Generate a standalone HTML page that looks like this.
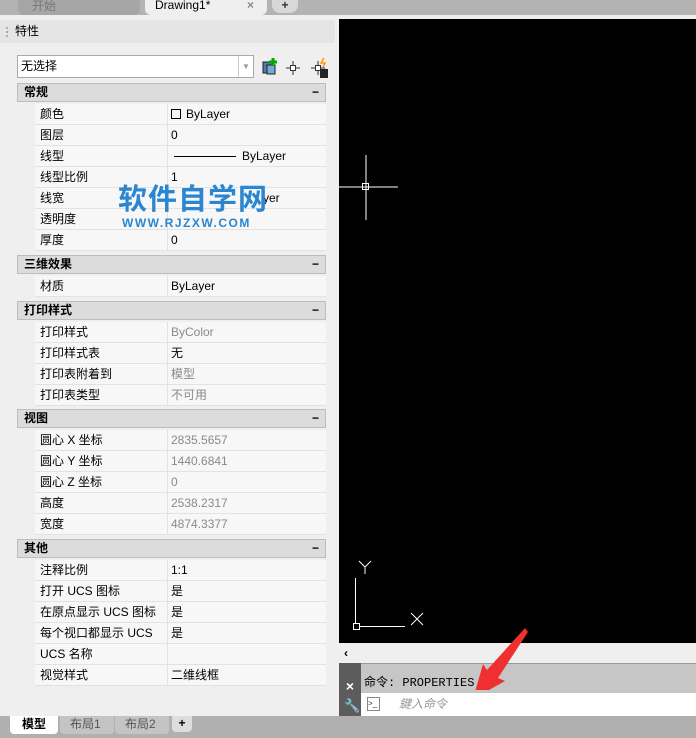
<!DOCTYPE html><html><head><meta charset="utf-8"><style>
*{margin:0;padding:0;box-sizing:border-box}
body{width:696px;height:738px;overflow:hidden;background:#efefef;font-family:"Liberation Sans","Noto Sans CJK SC",sans-serif;font-size:12px;color:#000;position:relative}
.a{position:absolute}
.hdr{position:absolute;left:17px;width:309px;height:19px;background:#dcdcdc;border:1px solid #bdbdbd;font-weight:bold;padding-left:6px;line-height:17px}
.hdr:after{content:"−";position:absolute;right:6px;top:0;font-weight:bold}
.row{position:absolute;left:35px;width:291px;height:21px;border-bottom:1px solid #e2e2e2;background:#f7f7f7;line-height:20px}
.row .l{position:absolute;left:5px}
.row .v{position:absolute;left:132px;top:0;height:21px;border-left:1px solid #e2e2e2;padding-left:3px;width:159px}
.g{color:#8a8a8a}
</style></head><body>
<div class="a" style="left:0;top:0;width:696px;height:15px;background:#b3b3b3"></div>
<div class="a" style="left:18px;top:0;width:122px;height:15px;background:#a6a6a6;border-radius:0 0 6px 6px;color:#777;padding-left:14px;line-height:12px">开始</div>
<div class="a" style="left:145px;top:0;width:122px;height:15px;background:#efefef;border-radius:0 0 6px 6px;line-height:11px;padding-left:10px">Drawing1*<span style="position:absolute;left:102px;color:#888;font-weight:bold">×</span></div>
<div class="a" style="left:272px;top:0;width:26px;height:13px;background:#d8d8d8;border-radius:0 0 8px 8px;text-align:center;font-weight:bold;line-height:11px;color:#333">+</div>
<div class="a" style="left:0;top:20px;width:335px;height:23px;background:#e5e5e5;padding-left:15px;line-height:22px">特性</div>
<div class="a" style="left:6px;top:27px;width:2px;height:10px;border-left:2px dotted #aaa"></div>
<div class="a" style="left:17px;top:55px;width:237px;height:23px;background:#fff;border:1px solid #a9a9a9;line-height:21px;padding-left:3px">无选择<span style="position:absolute;right:0;top:0;width:15px;height:21px;border-left:1px solid #ccc;color:#999;font-size:8px;text-align:center">▼</span></div>
<svg class="a" style="left:260px;top:57px" width="70" height="22"><rect x="3" y="5" width="10" height="11" fill="#4a7fb0" stroke="#222"/><rect x="7" y="8" width="8" height="9" fill="#7aa8d4" stroke="#222"/><path d="M13 1v8M9 5h8" stroke="#0a0" stroke-width="3"/><path d="M33 4v14M26 11h14" stroke="#333"/><rect x="30.5" y="8.5" width="5" height="5" fill="#fff" stroke="#333"/><path d="M58 4v14M51 11h14" stroke="#333"/><rect x="55.5" y="8.5" width="5" height="5" fill="#fff" stroke="#333"/><rect x="60" y="12" width="8" height="9" fill="#222"/><path d="M64 1l-3 5h4l-2 4" stroke="#f90" fill="none" stroke-width="1.5"/></svg>
<div class="hdr" style="top:83px">常规</div>
<div class="row" style="top:104px"><span class="l">颜色</span><span class="v"><span style="display:inline-block;width:10px;height:10px;border:1px solid #000;vertical-align:-1px;margin-right:5px"></span>ByLayer</span></div>
<div class="row" style="top:125px"><span class="l">图层</span><span class="v">0</span></div>
<div class="row" style="top:146px"><span class="l">线型</span><span class="v"><span style="display:inline-block;width:62px;border-top:1px solid #000;vertical-align:3px;margin:0 6px 0 3px"></span>ByLayer</span></div>
<div class="row" style="top:167px"><span class="l">线型比例</span><span class="v">1</span></div>
<div class="row" style="top:188px"><span class="l">线宽</span><span class="v"></span><span style="position:absolute;left:228px">yer</span></div>
<div class="row" style="top:209px"><span class="l">透明度</span><span class="v"></span></div>
<div class="row" style="top:230px"><span class="l">厚度</span><span class="v">0</span></div>
<div class="hdr" style="top:255px">三维效果</div>
<div class="row" style="top:276px"><span class="l">材质</span><span class="v">ByLayer</span></div>
<div class="hdr" style="top:301px">打印样式</div>
<div class="row" style="top:322px"><span class="l">打印样式</span><span class="v g">ByColor</span></div>
<div class="row" style="top:343px"><span class="l">打印样式表</span><span class="v">无</span></div>
<div class="row" style="top:364px"><span class="l">打印表附着到</span><span class="v g">模型</span></div>
<div class="row" style="top:385px"><span class="l">打印表类型</span><span class="v g">不可用</span></div>
<div class="hdr" style="top:409px">视图</div>
<div class="row" style="top:430px"><span class="l">圆心 X 坐标</span><span class="v g">2835.5657</span></div>
<div class="row" style="top:451px"><span class="l">圆心 Y 坐标</span><span class="v g">1440.6841</span></div>
<div class="row" style="top:472px"><span class="l">圆心 Z 坐标</span><span class="v g">0</span></div>
<div class="row" style="top:493px"><span class="l">高度</span><span class="v g">2538.2317</span></div>
<div class="row" style="top:514px"><span class="l">宽度</span><span class="v g">4874.3377</span></div>
<div class="hdr" style="top:539px">其他</div>
<div class="row" style="top:560px"><span class="l">注释比例</span><span class="v">1:1</span></div>
<div class="row" style="top:581px"><span class="l">打开 UCS 图标</span><span class="v">是</span></div>
<div class="row" style="top:602px"><span class="l">在原点显示 UCS 图标</span><span class="v">是</span></div>
<div class="row" style="top:623px"><span class="l">每个视口都显示 UCS</span><span class="v">是</span></div>
<div class="row" style="top:644px"><span class="l">UCS 名称</span><span class="v"></span></div>
<div class="row" style="top:665px"><span class="l">视觉样式</span><span class="v">二维线框</span></div>
<div class="a" style="left:118px;top:183px;font-size:29px;font-weight:bold;color:#2a86d0;letter-spacing:1px;line-height:34px">软件自学网</div>
<div class="a" style="left:122px;top:216px;font-size:12px;font-weight:bold;color:#2a86d0;letter-spacing:1.5px">WWW.RJZXW.COM</div>
<div class="a" style="left:339px;top:19px;width:357px;height:624px;background:#000"></div>
<svg class="a" style="left:339px;top:19px" width="357" height="624"><g stroke="#fff" fill="none"><path d="M27 136v65M0 168h59"/><rect x="23.5" y="164.5" width="6" height="6"/><path d="M16.5 559v45M20 607.5h46"/><rect x="14.5" y="604.5" width="6" height="6"/><path d="M20 542l6 6 6-6M26 548v7M72 594l12 12M84 594l-12 12"/></g></svg>
<div class="a" style="left:339px;top:643px;width:357px;height:21px;background:#efefef;font-weight:bold;padding-left:5px;line-height:20px">‹</div>
<div class="a" style="left:339px;top:663px;width:22px;height:53px;background:#5c5c5c;color:#fff;font-weight:bold;font-size:14px;text-align:center;line-height:46px">×</div>
<div class="a" style="left:361px;top:663px;width:335px;height:30px;background:#c6c6c6;border-top:1px solid #999;font-family:'Liberation Mono','Noto Sans CJK SC',monospace;padding:12px 0 0 3px;line-height:14px">命令: PROPERTIES</div>
<div class="a" style="left:361px;top:693px;width:335px;height:23px;background:#fff;color:#999;font-style:italic;padding-left:38px;line-height:22px">鍵入命令</div>
<div class="a" style="left:367px;top:697px;width:13px;height:14px;border:1px solid #888;font-size:8px;line-height:12px;color:#333">&gt;_</div>
<div class="a" style="left:344px;top:698px;color:#fff;font-size:13px">🔧</div>
<svg class="a" style="left:465px;top:625px" width="65" height="65"><path d="M60 3L22 45l-4-6-10 35 0 0 32-18-7-3L63 7z" fill="#f03030"/></svg>
<div class="a" style="left:0;top:716px;width:696px;height:22px;background:#b0b0b0"></div>
<div class="a" style="left:10px;top:716px;width:48px;height:18px;background:#fff;font-weight:bold;line-height:17px;padding-left:12px;border-radius:0 0 4px 4px">模型</div>
<div class="a" style="left:60px;top:716px;width:54px;height:18px;background:#c4c4c4;color:#555;line-height:17px;padding-left:10px;border-radius:0 0 4px 4px">布局1</div>
<div class="a" style="left:115px;top:716px;width:54px;height:18px;background:#c4c4c4;color:#555;line-height:17px;padding-left:10px;border-radius:0 0 4px 4px">布局2</div>
<div class="a" style="left:172px;top:716px;width:20px;height:16px;background:#ddd;text-align:center;font-weight:bold;line-height:15px;border-radius:0 0 4px 4px">+</div>
</body></html>
